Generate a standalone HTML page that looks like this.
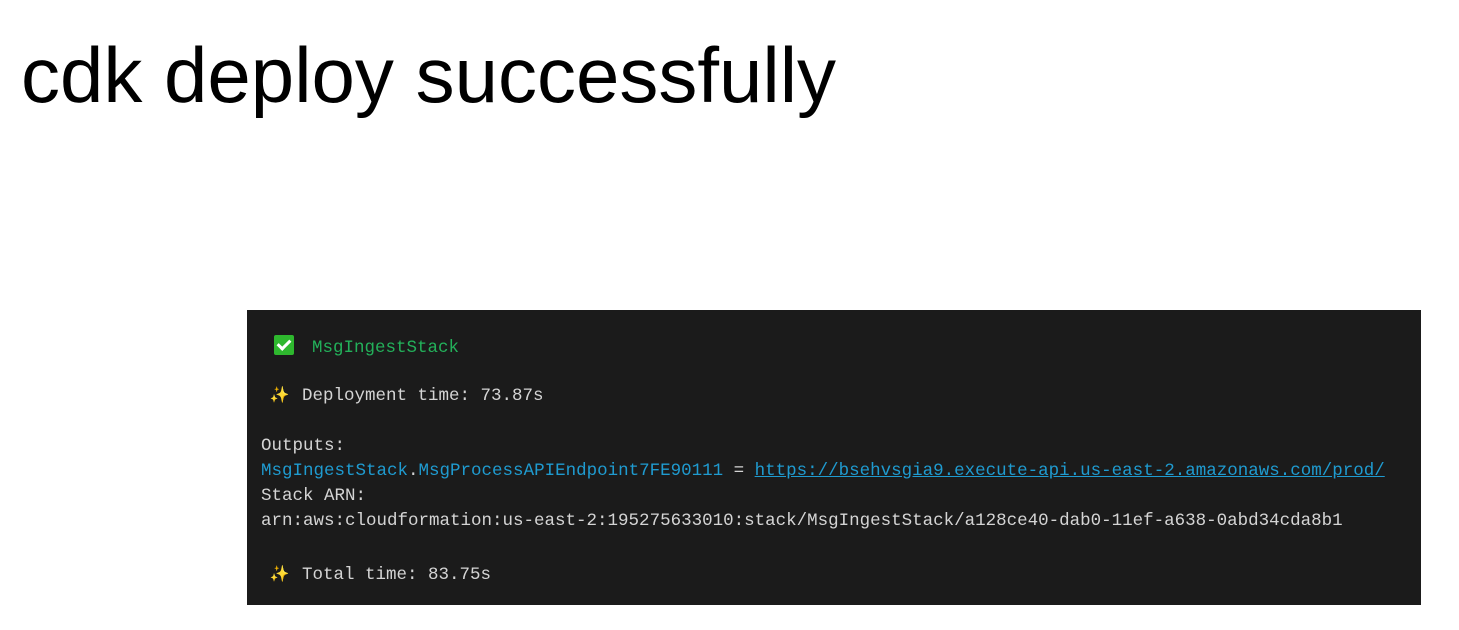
<!DOCTYPE html>
<html><head><meta charset="utf-8"><style>
body{margin:0;width:1459px;height:630px;background:#fff;position:relative;overflow:hidden}
h1{position:absolute;left:21px;top:36px;margin:0;font:300 78px/1 "Liberation Sans",sans-serif;color:#000;letter-spacing:0px}
.t{position:absolute;left:247px;top:310px;width:1174px;height:295px;background:#1b1b1b}
.l{position:absolute;left:14px;font:17.5px/1 "Liberation Mono",monospace;color:#d4d4d4;white-space:pre}
.g{color:#23b05a}.b{color:#1f9bd0}.u{text-decoration:underline}
.chk{display:inline-block;width:20px;height:20px;background:#2eb82e;border-radius:2px;vertical-align:-3px;position:relative;margin-right:18px}
.chk:after{content:"";position:absolute;left:6px;top:2px;width:5px;height:10px;border:solid #fff;border-width:0 3px 3px 0;transform:rotate(45deg)}
.sp{color:#f7d23b;display:inline-block;width:45px;text-align:center;font-size:16px}
</style></head><body>
<h1>cdk deploy successfully</h1>
<div class="t">
<div class="l" style="top:25px;left:27px"><span class="chk"></span><span class="g">MsgIngestStack</span></div>
<div class="l" style="top:78px;left:10px"><span class="sp">✨</span>Deployment time: 73.87s</div>
<div class="l" style="top:128px">Outputs:</div>
<div class="l" style="top:153px"><span class="b">MsgIngestStack</span>.<span class="b">MsgProcessAPIEndpoint7FE90111</span> = <span class="b u">https://bsehvsgia9.execute-api.us-east-2.amazonaws.com/prod/</span></div>
<div class="l" style="top:178px">Stack ARN:</div>
<div class="l" style="top:203px">arn:aws:cloudformation:us-east-2:195275633010:stack/MsgIngestStack/a128ce40-dab0-11ef-a638-0abd34cda8b1</div>
<div class="l" style="top:257px;left:10px"><span class="sp">✨</span>Total time: 83.75s</div>
</div>
</body></html>
